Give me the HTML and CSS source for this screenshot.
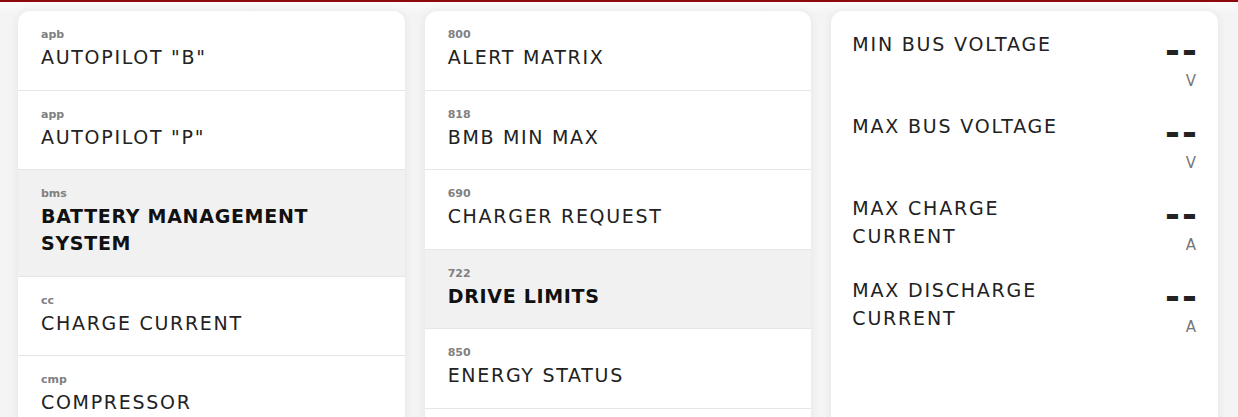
FILE: index.html
```html
<!DOCTYPE html>
<html lang="en">
<head>
  <meta charset="UTF-8">
  <title>CAN Signal Browser</title>
  <meta name="viewport" content="width=device-width, initial-scale=1.0">
  <link rel="stylesheet" href="styles.css">
</head>
<body>
  <div class="topbar"></div>

  <main class="panels">
    <section class="card">
      <div class="item"><div class="code">apb</div><div class="name">AUTOPILOT "B"</div></div>
      <div class="item"><div class="code">app</div><div class="name">AUTOPILOT "P"</div></div>
      <div class="item active"><div class="code">bms</div><div class="name">BATTERY MANAGEMENT SYSTEM</div></div>
      <div class="item"><div class="code">cc</div><div class="name">CHARGE CURRENT</div></div>
      <div class="item"><div class="code">cmp</div><div class="name">COMPRESSOR</div></div>
    </section>

    <section class="card">
      <div class="item"><div class="code">800</div><div class="name">ALERT MATRIX</div></div>
      <div class="item"><div class="code">818</div><div class="name">BMB MIN MAX</div></div>
      <div class="item"><div class="code">690</div><div class="name">CHARGER REQUEST</div></div>
      <div class="item active"><div class="code">722</div><div class="name">DRIVE LIMITS</div></div>
      <div class="item"><div class="code">850</div><div class="name">ENERGY STATUS</div></div>
      <div class="item"><div class="code">&nbsp;</div><div class="name">&nbsp;</div></div>
    </section>

    <section class="card signals">
      <div class="signal">
        <div class="label">MIN BUS VOLTAGE</div>
        <div class="reading"><div class="value">--</div><div class="unit">V</div></div>
      </div>
      <div class="signal">
        <div class="label">MAX BUS VOLTAGE</div>
        <div class="reading"><div class="value">--</div><div class="unit">V</div></div>
      </div>
      <div class="signal">
        <div class="label">MAX CHARGE CURRENT</div>
        <div class="reading"><div class="value">--</div><div class="unit">A</div></div>
      </div>
      <div class="signal">
        <div class="label">MAX DISCHARGE CURRENT</div>
        <div class="reading"><div class="value">--</div><div class="unit">A</div></div>
      </div>
    </section>
  </main>
</body>
</html>
```

FILE: styles.css
```css
html, body {
  height: 100%;
}

body {
  margin: 0;
  padding: 0;
  font-family: "DejaVu Sans", sans-serif;
  color: #1c1c1c;
  background: linear-gradient(#fcfcfc, #f4f4f4 14px);
  overflow: hidden;
}

.topbar {
  height: 2px;
  background-color: #8e0a0a;
}

.panels {
  display: grid;
  grid-template-columns: repeat(3, 1fr);
  gap: 20px;
  padding: 9px 20px 0 18px;
  height: 100%;
}

.card {
  background: #fff;
  border-radius: 12px 12px 0 0;
  box-shadow: 0 0 10px rgba(0, 0, 0, 0.07);
  overflow: hidden;
}

/* list items */
.item {
  padding: 15px 23px 18.6px;
  border-bottom: 1px solid #e6e6e6;
}

.item.active {
  background-color: #f1f1f1;
}

.code {
  font-size: 11px;
  line-height: 18px;
  font-weight: bold;
  color: #808080;
}

.name {
  font-size: 19px;
  line-height: 27px;
  letter-spacing: 1.7px;
  color: #222;
  padding-right: 40px;
}

.item.active .name {
  font-weight: bold;
  color: #111;
  letter-spacing: 0.7px;
}

/* signal readouts */
.signals {
  padding: 19px 22px 0 21px;
}

.signal {
  display: flex;
  justify-content: space-between;
  align-items: flex-start;
  height: 82px;
}

.label {
  max-width: 240px;
  font-size: 19px;
  line-height: 28px;
  letter-spacing: 1.8px;
  color: #222;
}

.reading {
  text-align: right;
}

.value {
  font-size: 36px;
  line-height: 42px;
  font-weight: bold;
  letter-spacing: 2px;
  color: #222;
  margin-right: -3px;
}

.unit {
  font-size: 15px;
  line-height: 18px;
  color: #777;
}
```
